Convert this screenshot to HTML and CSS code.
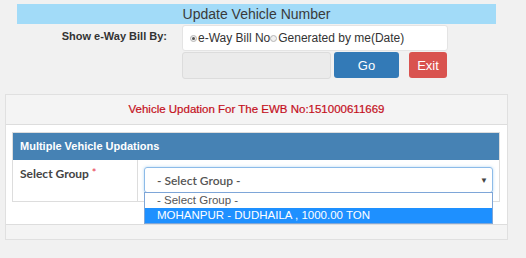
FILE: index.html
```html
<!DOCTYPE html>
<html lang="en">
<head>
    <meta charset="UTF-8">
    <title>Update Vehicle Number</title>
    <link rel="stylesheet" href="styles.css">
</head>
<body>
    <div class="title-bar">Update Vehicle Number</div>

    <div class="search-form">
        <div class="search-label">Show e-Way Bill By:</div>
        <div class="search-fields">
            <div class="radio-box">
                <span class="radio checked"></span><span>e-Way Bill No</span><span class="radio"></span><span>Generated by me(Date)</span>
            </div>
            <div class="search-actions">
                <input type="text" class="ewb-input" disabled>
                <button type="button" class="btn btn-go">Go</button>
                <button type="button" class="btn btn-exit">Exit</button>
            </div>
        </div>
    </div>

    <div class="panel">
        <div class="panel-heading">Vehicle Updation For The EWB No:151000611669</div>
        <div class="panel-body">
            <div class="group-table">
                <div class="group-head">Multiple Vehicle Updations</div>
                <div class="group-row">
                    <div class="group-label">Select Group <span class="req">*</span></div>
                    <div class="group-field">
                        <div class="fake-select">
                            <span>- Select Group -</span>
                            <span class="caret">&#9660;</span>
                        </div>
                        <!-- opened dropdown list -->
                        <ul class="select-list">
                            <li>- Select Group -</li>
                            <li class="selected">MOHANPUR - DUDHAILA , 1000.00 TON</li>
                        </ul>
                    </div>
                </div>
            </div>
        </div>
        <div class="panel-footer"></div>
    </div>
</body>
</html>
```

FILE: styles.css
```css
body {
    margin: 0;
    background: #f1f1f1;
    font-family: "Liberation Sans", Arial, sans-serif;
    color: #333;
    width: 526px;
    height: 258px;
    overflow: hidden;
}

.title-bar {
    margin: 4px 0 0 17px;
    width: 479px;
    height: 20px;
    line-height: 20px;
    background: #a2dbf8;
    text-align: center;
    font-size: 14px;
    color: #3a3a3a;
}

.search-form {
    display: flex;
    margin-top: 1px;
}
.search-label {
    width: 167px;
    text-align: right;
    font-weight: bold;
    font-size: 11px;
    padding-top: 5px;
    margin-right: 15px;
}
.search-fields {
    display: flex;
    flex-direction: column;
    gap: 1px;
}
.radio-box {
    background: #fff;
    border: 1px solid #e4e4e4;
    border-radius: 3px;
    display: flex;
    align-items: center;
    padding-left: 7px;
    box-sizing: border-box;
    width: 266px;
    height: 26px;
    font-size: 12px;
    color: #333;
}
.radio {
    display: inline-block;
    width: 7px;
    height: 7px;
    border-radius: 50%;
    border: 1px solid #b5b5b5;
    background: #f0f0f0;
    margin-right: 1px;
    box-sizing: border-box;
    position: relative;
}
.radio.checked::after {
    content: "";
    position: absolute;
    left: 1px;
    top: 1px;
    width: 3px;
    height: 3px;
    border-radius: 50%;
    background: #555;
}

.search-actions {
    display: flex;
    align-items: flex-start;
}
.ewb-input {
    width: 149px;
    height: 27px;
    box-sizing: border-box;
    background: #ebebeb;
    border: 1px solid #dcdcdc;
    border-radius: 3px;
    margin: 0;
}
.btn {
    height: 26px;
    border: none;
    border-radius: 3px;
    color: #fff;
    font-family: "Liberation Sans", Arial, sans-serif;
    font-size: 13px;
    padding: 0;
    cursor: pointer;
}
.btn-go {
    width: 65px;
    margin-left: 3px;
    background: #337ab7;
}
.btn-exit {
    width: 38px;
    margin-left: 10px;
    background: #d9534f;
}

.panel {
    margin: 15px 0 0 5px;
    width: 503px;
    box-sizing: border-box;
    border: 1px solid #e0e0e0;
    background: #fff;
}
.panel-heading {
    height: 29px;
    line-height: 28px;
    background: #f4f4f4;
    border-bottom: 1px solid #dddddd;
    text-align: center;
    color: #c4101c;
    font-size: 11.5px;
    -webkit-text-stroke: 0.2px #c4101c;
}
.panel-body {
    padding: 7px 7px 22px 6px;
}
.group-table {
    border: 1px solid #dddddd;
}
.group-head {
    height: 27px;
    line-height: 27px;
    background: #4682b4;
    color: #fff;
    font-weight: bold;
    font-size: 11px;
    padding-left: 7px;
}
.group-row {
    display: flex;
    height: 41px;
}
.group-label {
    width: 125px;
    border-right: 1px solid #dddddd;
    font-family: Lato, "Open Sans", sans-serif;
    font-weight: bold;
    font-size: 12px;
    color: #444;
    padding: 6px 0 0 7px;
    box-sizing: border-box;
}
.req {
    color: #e8344a;
    font-weight: normal;
    font-size: 11px;
    vertical-align: top;
}
.group-field {
    flex: 1;
    padding: 7px 6px 0 6px;
    position: relative;
}
.fake-select {
    height: 26px;
    box-sizing: border-box;
    border: 1px solid #8dbbe8;
    border-radius: 3px;
    box-shadow: 0 0 3px rgba(102,175,233,0.5);
    display: flex;
    align-items: center;
    justify-content: space-between;
    padding: 0 4px 0 12px;
    font-family: Lato, "Open Sans", sans-serif;
    font-size: 12px;
    font-weight: 600;
    color: #555;
}
.caret {
    font-size: 8px;
    color: #444;
}
.select-list {
    position: absolute;
    left: 6px;
    right: 6px;
    top: 32px;
    margin: 0;
    padding: 0;
    list-style: none;
    background: #fff;
    border: 1px solid #7ea6d8;
    font-size: 11.5px;
    z-index: 2;
}
.select-list li {
    height: 15px;
    line-height: 15px;
    padding-left: 12px;
    color: #555;
}
.select-list li.selected {
    background: #1e90ff;
    color: #fff;
}

.panel-footer {
    height: 14px;
    background: #f4f4f4;
    border-top: 1px solid #dddddd;
}
```
